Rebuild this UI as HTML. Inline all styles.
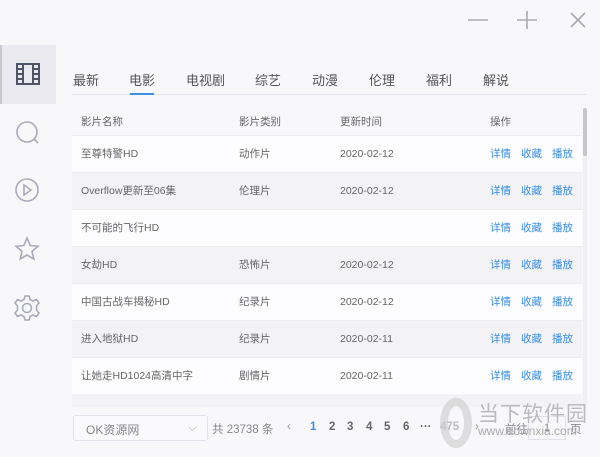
<!DOCTYPE html><html><head><meta charset="utf-8"><style>
*{margin:0;padding:0;box-sizing:border-box}
body{width:600px;height:457px;background:#f8f8fb;font-family:"Liberation Sans","Noto Sans CJK SC",sans-serif;position:relative;overflow:hidden;color:#666}
.abs{position:absolute}
.sel{left:0;top:45px;width:56px;height:59px;background:#e9e9ef;border-left:2px solid #c8c8d0}
.tabs span{position:absolute;top:70px;font-size:13px;color:#555}
.row{position:absolute;left:72px;width:510px;height:37px;font-size:10.5px;color:#666;border-bottom:1px solid #eeeef2}
.row span{position:absolute;top:0;line-height:36px}
.w{background:#fdfdff}.g{background:#f3f3f6}
.row .a{color:#3a8ee6}
.pg{position:absolute;top:421px;font-size:11.5px;color:#666;font-weight:bold}
</style></head><body>
<svg class="abs" style="left:465px;top:11px" width="125" height="18" stroke="#aaa" stroke-width="1.6" fill="none">
<path d="M3 9H23M52 9H72M62 0V18M106 2L120 16M120 2L106 16"/></svg>
<div class="abs sel"></div>
<svg class="abs" style="left:15px;top:62px" width="26" height="24" fill="none" stroke="#4f5566" stroke-width="2">
<rect x="2" y="2" width="22" height="20"/><path d="M8 2V22M18 2V22M2 7H8M2 12H8M2 17H8M18 7H24M18 12H24M18 17H24"/></svg>
<svg class="abs" style="left:14px;top:119px" width="28" height="28" fill="none" stroke="#aab" stroke-width="1.6">
<circle cx="13" cy="13" r="10"/><path d="M20 20L24 24"/></svg>
<svg class="abs" style="left:14px;top:177px" width="26" height="26" fill="none" stroke="#aab" stroke-width="1.6">
<circle cx="13" cy="13" r="11"/><path d="M10 8L17 13L10 18Z"/></svg>
<svg class="abs" style="left:14px;top:236px" width="26" height="26" fill="none" stroke="#aab" stroke-width="1.6">
<path d="M13 2L16.2 9.5L24 10.2L18 15.4L19.8 23L13 19L6.2 23L8 15.4L2 10.2L9.8 9.5Z"/></svg>
<svg class="abs" style="left:13px;top:294px" width="28" height="28" fill="none" stroke="#aab" stroke-width="1.6">
<circle cx="14" cy="14" r="4.5"/><path d="M12 2H16L17 5.5L20 7L23.5 5.5L26 9L23.5 12V16L26 19L23.5 22.5L20 21L17 22.5L16 26H12L11 22.5L8 21L4.5 22.5L2 19L4.5 16V12L2 9L4.5 5.5L8 7L11 5.5Z"/></svg>
<div class="tabs">
<span style="left:73px">最新</span><span style="left:129px">电影</span><span style="left:186px">电视剧</span><span style="left:255px">综艺</span><span style="left:312px">动漫</span><span style="left:369px">伦理</span><span style="left:426px">福利</span><span style="left:483px">解说</span></div>
<div class="abs" style="left:72px;top:94px;width:515px;height:1px;background:#e2e4ee"></div>
<div class="abs" style="left:130px;top:93px;width:24px;height:2px;background:#3a8ee6"></div>
<div class="row" style="top:108px;height:28px;background:#f8f8fb"><span style="left:9px;line-height:28px">影片名称</span><span style="left:167px;line-height:28px">影片类别</span><span style="left:268px;line-height:28px">更新时间</span><span style="left:418px;line-height:28px">操作</span></div>
<div class="row w" style="top:136px"><span style="left:9px">至尊特警HD</span><span style="left:167px">动作片</span><span style="left:268px">2020-02-12</span><span class="a" style="left:418px">详情</span><span class="a" style="left:449px">收藏</span><span class="a" style="left:480px">播放</span></div>
<div class="row g" style="top:173px"><span style="left:9px">Overflow更新至06集</span><span style="left:167px">伦理片</span><span style="left:268px">2020-02-12</span><span class="a" style="left:418px">详情</span><span class="a" style="left:449px">收藏</span><span class="a" style="left:480px">播放</span></div>
<div class="row w" style="top:210px"><span style="left:9px">不可能的飞行HD</span><span class="a" style="left:418px">详情</span><span class="a" style="left:449px">收藏</span><span class="a" style="left:480px">播放</span></div>
<div class="row g" style="top:247px"><span style="left:9px">女劫HD</span><span style="left:167px">恐怖片</span><span style="left:268px">2020-02-12</span><span class="a" style="left:418px">详情</span><span class="a" style="left:449px">收藏</span><span class="a" style="left:480px">播放</span></div>
<div class="row w" style="top:284px"><span style="left:9px">中国古战车揭秘HD</span><span style="left:167px">纪录片</span><span style="left:268px">2020-02-12</span><span class="a" style="left:418px">详情</span><span class="a" style="left:449px">收藏</span><span class="a" style="left:480px">播放</span></div>
<div class="row g" style="top:321px"><span style="left:9px">进入地狱HD</span><span style="left:167px">纪录片</span><span style="left:268px">2020-02-11</span><span class="a" style="left:418px">详情</span><span class="a" style="left:449px">收藏</span><span class="a" style="left:480px">播放</span></div>
<div class="row w" style="top:358px"><span style="left:9px">让她走HD1024高清中字</span><span style="left:167px">剧情片</span><span style="left:268px">2020-02-11</span><span class="a" style="left:418px">详情</span><span class="a" style="left:449px">收藏</span><span class="a" style="left:480px">播放</span></div>
<div class="row g" style="top:394px;height:13px;border:none"></div>
<div class="abs" style="left:583px;top:108px;width:4px;height:300px;background:#f0f0f3"></div>
<div class="abs" style="left:583px;top:108px;width:4px;height:48px;background:#c5c5cc;border-radius:2px"></div>
<div class="abs" style="left:73px;top:415px;width:135px;height:26px;border:1px solid #e2e2ea;background:#fafafd;border-radius:3px;font-size:12px;color:#888;padding:5px 0 0 12px">OK资源网<span style="position:absolute;right:10px;top:4px;color:#bbb">⌵</span></div>
<div class="abs" style="left:212px;top:421px;font-size:11.5px;color:#888;white-space:nowrap">共 23738 条</div>
<div class="pg" style="left:287px;color:#999;font-weight:normal">‹</div>
<div class="pg" style="left:310px;color:#3a8ee6">1</div>
<div class="pg" style="left:329px">2</div>
<div class="pg" style="left:347px">3</div>
<div class="pg" style="left:366px">4</div>
<div class="pg" style="left:384px">5</div>
<div class="pg" style="left:403px">6</div>
<div class="pg" style="left:420px">···</div>
<div class="pg" style="left:440px;color:#bbb">475</div>
<div class="pg" style="left:475px;color:#999;font-weight:normal">›</div>
<div class="abs" style="left:505px;top:421px;font-size:11.5px;color:#888">前往</div>
<div class="abs" style="left:528px;top:416px;width:38px;height:24px;border:1px solid #e2e2ea;font-size:11px;text-align:center;line-height:22px;color:#888">1</div>
<div class="abs" style="left:570px;top:421px;font-size:11.5px;color:#888">页</div>
<div class="abs" style="left:440px;top:398px;width:32px;height:50px;border:8px solid #ccc;border-radius:50%;opacity:.6"></div>
<div class="abs" style="left:478px;top:398px;font-size:21px;color:#bbb;letter-spacing:1px">当下软件园</div>
<div class="abs" style="left:478px;top:424px;font-size:12px;color:#aaa">www.downxia.com</div>
</body></html>
